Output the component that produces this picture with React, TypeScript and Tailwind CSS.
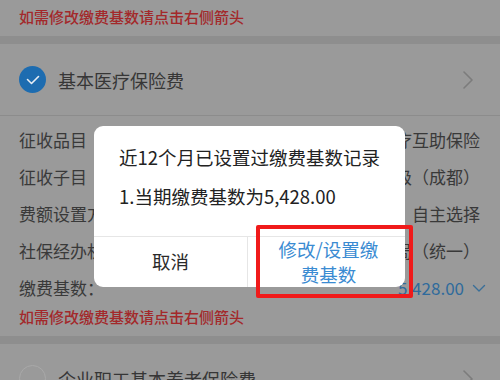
import React from "react";

const font = { fontFamily: '"Noto Sans CJK SC", "Noto Sans", sans-serif' };

function ChevronRight() {
  return (
    <svg width="12" height="20" viewBox="0 0 12 20" fill="none">
      <path d="M2 2 L10 10 L2 18" stroke="#7c7c7c" strokeWidth="1.6" strokeLinecap="round" strokeLinejoin="round" />
    </svg>
  );
}

function ChevronDown() {
  return (
    <svg width="14" height="10" viewBox="0 0 14 10" fill="none">
      <path d="M1.5 2.5 L7 8 L12.5 2.5" stroke="#3a6f98" strokeWidth="1.4" strokeLinecap="round" strokeLinejoin="round" />
    </svg>
  );
}

function Row({ label, value, blue }: { label: string; value: string; blue?: boolean }) {
  return (
    <div className="flex h-[37px] items-center justify-between pl-[19px] pr-[20px]">
      <span className="text-[17px] leading-none text-[#393939]">{label}</span>
      {blue ? (
        <span className="flex items-center gap-[8px] text-[17px] leading-none text-[#2f6b9c] -mr-[6px]">
          5,428.00
          <ChevronDown />
        </span>
      ) : (
        <span className="text-[17px] leading-none text-[#393939]">{value}</span>
      )}
    </div>
  );
}

export default function App() {
  return (
    <div className="relative h-[380px] w-[500px] overflow-hidden bg-[#8e8e8e]" style={font}>
      {/* top card */}
      <div className="bg-[#9a9a9a] pl-[19px] pt-[6px] pb-[8px]">
        <div className="text-[15px] leading-[22px] font-medium text-[#a3292b]">如需修改缴费基数请点击右侧箭头</div>
      </div>

      {/* medical card */}
      <div className="mt-2 bg-[#9a9a9a]">
        <div className="flex h-[72px] items-center border-b border-[#8c8c8c] pl-[19px] pr-[26px]">
          <div className="flex h-[27px] w-[27px] items-center justify-center rounded-full bg-[#1d6cb0]">
            <svg width="14" height="10" viewBox="0 0 14 10" fill="none">
              <path d="M1.5 4.5 L5.5 8.5 L12.5 1.5" stroke="#e8eef5" strokeWidth="1.6" strokeLinecap="round" strokeLinejoin="round" />
            </svg>
          </div>
          <span className="ml-[12px] flex-1 text-[18px] leading-none text-[#363636]">基本医疗保险费</span>
          <ChevronRight />
        </div>
        <div className="pt-[5px]">
          <Row label="征收品目" value="职工大额医疗互助保险" />
          <Row label="征收子目" value="市本级（成都）" />
          <Row label="费额设置方式" value="自主选择" />
          <Row label="社保经办机构" value="成都市社保局（统一）" />
          <Row label="缴费基数：" value="" blue />
        </div>
        <div className="pl-[19px] pb-[8px] text-[15px] leading-[22px] font-medium text-[#a3292b]">如需修改缴费基数请点击右侧箭头</div>
      </div>

      {/* pension card */}
      <div className="mt-2 bg-[#9a9a9a]">
        <div className="flex h-[69px] items-center pl-[19px] pr-[26px]">
          <div className="h-[27px] w-[27px] rounded-full border-[1.5px] border-[#a9a9a9]" />
          <span className="ml-[12px] flex-1 text-[18px] leading-none text-[#363636]">企业职工基本养老保险费</span>
          <ChevronRight />
        </div>
      </div>

      {/* dialog */}
      <div className="absolute left-[94px] top-[126px] flex h-[161px] w-[311px] flex-col overflow-hidden rounded-[9px] bg-white">
        <div className="h-[111px] px-[25px] pt-[18px]">
          <div className="whitespace-nowrap text-[18.5px] leading-[26px] text-[#222]">近12个月已设置过缴费基数记录</div>
          <div className="mt-[13px] whitespace-nowrap text-[18.5px] leading-[26px] text-[#222]">1.当期缴费基数为5,428.00</div>
        </div>
        <div className="flex flex-1 border-t border-[#e6e6e6]">
          <div className="flex flex-1 items-center justify-center border-r border-[#e6e6e6] text-[18.5px] text-[#2a2a2a]">取消</div>
          <div className="flex flex-1 items-center justify-center pl-[4px] text-center text-[18.5px] leading-[25px] text-[#3a8bd2]">
            修改/设置缴<br />费基数
          </div>
        </div>
      </div>

      {/* red annotation box */}
      <div className="absolute left-[256px] top-[225px] h-[73px] w-[157px] rounded-[2px] border-[4px] border-[#f01a1a]" />
    </div>
  );
}
